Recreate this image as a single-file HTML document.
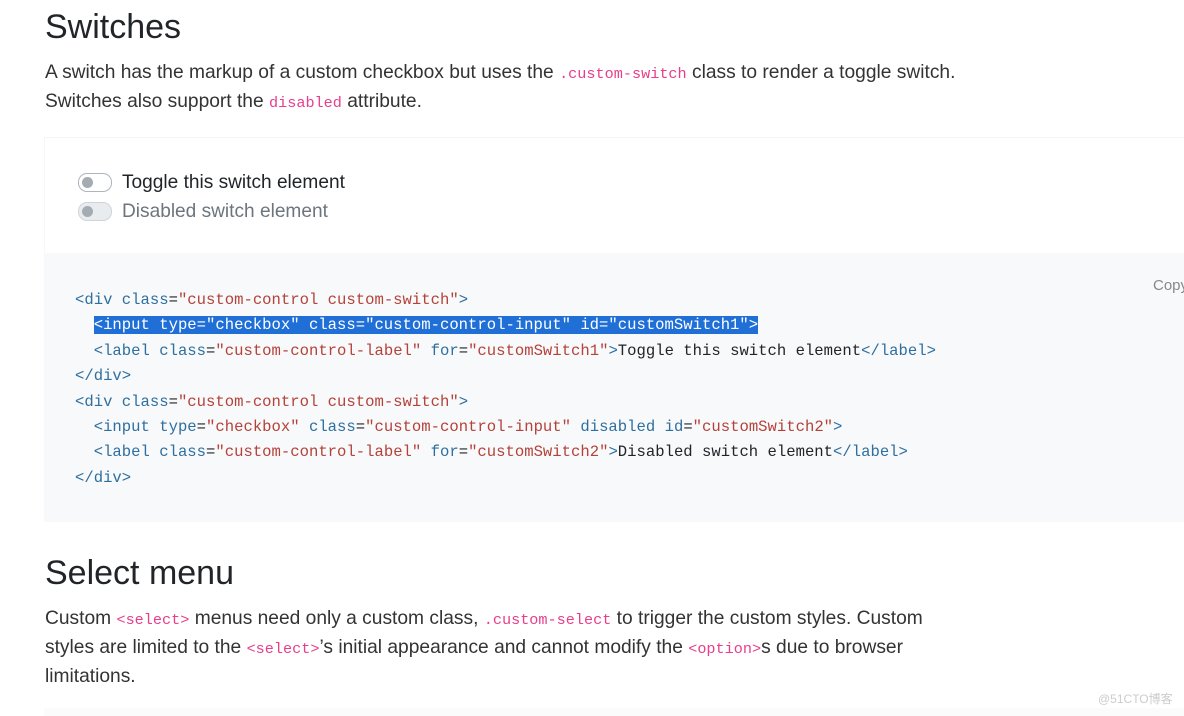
<!DOCTYPE html>
<html><head><meta charset="utf-8"><style>
body{margin:0;width:1184px;height:716px;overflow:hidden;background:#fff;font-family:"Liberation Sans","DejaVu Sans",sans-serif;color:#212529;position:relative}
.h{position:absolute;left:45px;font-size:34px;font-weight:500;margin:0;color:#212529}
.p{position:absolute;left:45px;font-size:19.2px;line-height:29px;color:#333;white-space:nowrap}
code{font-family:"Liberation Mono",monospace;color:#e83e8c;font-size:15.2px}
.ex{position:absolute;left:44px;top:137px;width:1140px;height:116px;border-top:1px solid #f4f5f6;border-left:1px solid #f6f7f8;background:#fff}
.sw{position:absolute;left:78px;width:32px;height:17px;border:1px solid #adb5bd;border-radius:9px;background:#fff}
.sw::after{content:"";position:absolute;left:3px;top:3px;width:11px;height:11px;border-radius:50%;background:#a5abb2}
.sw.d{background:#e9ecef;border-color:#ced4da}
.lb{position:absolute;left:122px;font-size:19.1px}
.code{position:absolute;left:44px;top:253px;width:1140px;height:269px;background:#f8f9fa}
pre{position:absolute;left:75px;top:288px;margin:0;font-family:"Liberation Mono",monospace;font-size:15.6px;line-height:25.4px;color:#212529}
.t{color:#2f6f9f}.a{color:#2f6f9f}.s{color:#b4423a}
.hl{background:#1f6fd6;color:#fff}
</style></head><body>
<h2 class="h" style="top:8px">Switches</h2>
<div class="p" style="top:58px">A switch has the markup of a custom checkbox but uses the <code>.custom-switch</code> class to render a toggle switch.</div>
<div class="p" style="top:87px">Switches also support the <code>disabled</code> attribute.</div>
<div class="ex"></div>
<div class="sw" style="top:173px"></div><div class="lb" style="top:172px">Toggle this switch element</div>
<div class="sw d" style="top:202px"></div><div class="lb" style="top:201px;color:#6c757d">Disabled switch element</div>
<div class="code"></div>
<div style="position:absolute;left:1153px;top:277px;font-size:15px;color:#888">Copy</div>
<pre><span class="t">&lt;div</span> <span class="a">class</span>=<span class="s">"custom-control custom-switch"</span><span class="t">&gt;</span>
  <span class="hl">&lt;input type="checkbox" class="custom-control-input" id="customSwitch1"&gt;</span>
  <span class="t">&lt;label</span> <span class="a">class</span>=<span class="s">"custom-control-label"</span> <span class="a">for</span>=<span class="s">"customSwitch1"</span><span class="t">&gt;</span>Toggle this switch element<span class="t">&lt;/label&gt;</span>
<span class="t">&lt;/div&gt;</span>
<span class="t">&lt;div</span> <span class="a">class</span>=<span class="s">"custom-control custom-switch"</span><span class="t">&gt;</span>
  <span class="t">&lt;input</span> <span class="a">type</span>=<span class="s">"checkbox"</span> <span class="a">class</span>=<span class="s">"custom-control-input"</span> <span class="a">disabled</span> <span class="a">id</span>=<span class="s">"customSwitch2"</span><span class="t">&gt;</span>
  <span class="t">&lt;label</span> <span class="a">class</span>=<span class="s">"custom-control-label"</span> <span class="a">for</span>=<span class="s">"customSwitch2"</span><span class="t">&gt;</span>Disabled switch element<span class="t">&lt;/label&gt;</span>
<span class="t">&lt;/div&gt;</span></pre>
<h2 class="h" style="top:554px">Select menu</h2>
<div class="p" style="top:604px">Custom <code>&lt;select&gt;</code> menus need only a custom class, <code>.custom-select</code> to trigger the custom styles. Custom</div>
<div class="p" style="top:633px">styles are limited to the <code>&lt;select&gt;</code>’s initial appearance and cannot modify the <code>&lt;option&gt;</code>s due to browser</div>
<div class="p" style="top:662px">limitations.</div>
<div style="position:absolute;left:44px;top:708px;width:1140px;height:8px;background:#fbfbfc"></div>
<div style="position:absolute;left:1098px;top:690px;font-size:12px;color:#ccc;font-family:'Liberation Sans','Noto Sans CJK SC',sans-serif">@51CTO博客</div>
</body></html>
